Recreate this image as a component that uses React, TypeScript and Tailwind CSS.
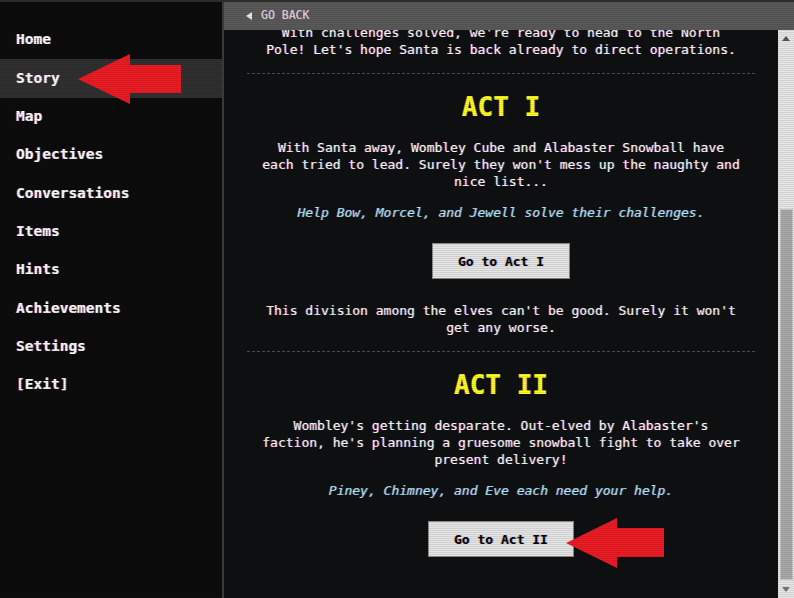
const navItems = ["Home", "Story", "Map", "Objectives", "Conversations", "Items", "Hints", "Achievements", "Settings", "[Exit]"];

const mono = "font-['DejaVu_Sans_Mono','Liberation_Mono',monospace]";
const glow = "[text-shadow:-1px_0_rgba(255,40,40,0.45),1px_0_rgba(40,160,255,0.45)]";

function RedArrow({ className, w, h, points }: { className: string; w: number; h: number; points: string }) {
  return (
    <svg className={className} width={w} height={h} viewBox={`0 0 ${w} ${h}`}>
      <polygon points={points} fill="#ed1c24" />
    </svg>
  );
}

function Act({ title, body, hint, button, after }: { title: string; body: string; hint: string; button: string; after?: string }) {
  return (
    <section className="flex flex-col items-center">
      <div className="mt-[15px] w-full border-t border-dashed border-[#4a4a4a]" />
      <h2 className={`mt-[18px] text-[26px] leading-[30px] font-bold text-[#ffff1e] ${glow}`}>{title}</h2>
      <p className="mt-[17px] max-w-[480px]">{body}</p>
      <p className="mt-[14px] italic text-[#a6efff]">{hint}</p>
      <button className="mt-[22px] h-[36px] border border-[#8a8a8a] bg-[#e6e6e6] px-[25px] text-[13px] font-bold text-black [text-shadow:-1px_0_rgba(255,120,0,0.35),1px_0_rgba(0,90,255,0.35)]">
        {button}
      </button>
      {after && <p className="mt-[23px] max-w-[480px]">{after}</p>}
    </section>
  );
}

export default function App() {
  return (
    <div className={`relative flex h-screen w-full overflow-hidden border-t-2 border-[#2c2c2c] bg-[#0c0c0d] ${mono}`}>
      <nav className="flex w-[224px] shrink-0 flex-col border-r-2 border-[#3c3c3c] bg-[#0c0c0d] pt-[19px]">
        {navItems.map((item) => (
          <div
            key={item}
            className={`flex h-[38.33px] items-center pl-4 text-[14.5px] font-bold text-white ${glow} ${item === "Story" ? "bg-[#303030]" : ""}`}
          >
            {item}
          </div>
        ))}
      </nav>

      <div className="flex min-w-0 flex-1 flex-col">
        <div className="flex h-[28px] shrink-0 items-center gap-[9px] bg-[#5a5a5a] pl-[22px] text-[11.5px] text-[#e2e2e2]">
          <svg width="6" height="8" viewBox="0 0 6 8">
            <polygon points="0,4 6,0 6,8" fill="#ececec" />
          </svg>
          <span className={glow}>GO BACK</span>
        </div>

        <div className="flex min-h-0 flex-1">
          <main className="min-w-0 flex-1 overflow-hidden bg-[#0f1012] px-[23px] text-center text-[13px] leading-[17px] text-white">
            <div className={`-mt-[6px] ${glow}`}>
              <p className="mx-auto max-w-[480px]">
                With challenges solved, we're ready to head to the North Pole! Let's hope Santa is back already to direct operations.
              </p>
              <Act
                title="ACT I"
                body="With Santa away, Wombley Cube and Alabaster Snowball have each tried to lead. Surely they won't mess up the naughty and nice list..."
                hint="Help Bow, Morcel, and Jewell solve their challenges."
                button="Go to Act I"
                after="This division among the elves can't be good. Surely it won't get any worse."
              />
              <Act
                title="ACT II"
                body="Wombley's getting desparate. Out-elved by Alabaster's faction, he's planning a gruesome snowball fight to take over present delivery!"
                hint="Piney, Chimney, and Eve each need your help."
                button="Go to Act II"
              />
            </div>
          </main>

          <div className="flex w-4 shrink-0 flex-col bg-[#e8e8e8]">
            <div className="flex h-[17px] items-center justify-center">
              <svg width="8" height="5" viewBox="0 0 8 5">
                <polygon points="4,0 8,5 0,5" fill="#555" />
              </svg>
            </div>
            <div className="h-[162px]" />
            <div className="ml-[2px] mr-px h-[371px] border border-[#c8c8c8] bg-[#aaaaaa]" />
            <div className="flex flex-1 items-center justify-center">
              <svg width="8" height="5" viewBox="0 0 8 5">
                <polygon points="0,0 8,0 4,5" fill="#777" />
              </svg>
            </div>
          </div>
        </div>
      </div>

      <RedArrow className="absolute left-[78px] top-[52px]" w={103} h={50} points="0,25 52,0 52,11 103,11 103,39 52,39 52,50" />
      <RedArrow className="absolute left-[566px] top-[516px]" w={98} h={50} points="0,25 51,0 51,10 98,10 98,39 51,39 51,50" />

      <div className="pointer-events-none absolute inset-0 bg-[repeating-linear-gradient(180deg,rgba(0,0,0,0.1)_0px,rgba(0,0,0,0.1)_1px,transparent_1px,transparent_2px)]" />
    </div>
  );
}
